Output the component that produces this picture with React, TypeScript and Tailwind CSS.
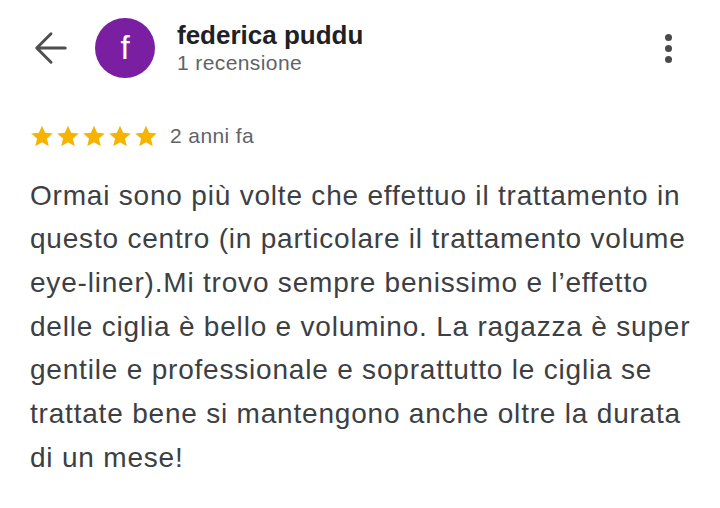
export default function App() {
  const lines = [
    "Ormai sono più volte che effettuo il trattamento in",
    "questo centro (in particolare il trattamento volume",
    "eye-liner).Mi trovo sempre benissimo e l’effetto",
    "delle ciglia è bello e volumino. La ragazza è super",
    "gentile e professionale e soprattutto le ciglia se",
    "trattate bene si mantengono anche oltre la durata",
    "di un mese!",
  ];
  return (
    <div className="w-[720px] h-[508px] bg-white overflow-hidden font-['Liberation_Sans',Arial,sans-serif]">
      <div className="flex items-center pt-[18px] pl-[33px] pr-[48px]">
        <svg width="36" height="36" viewBox="0 0 24 24" className="shrink-0">
          <path d="M21.5 12H3M12 2.5L2.5 12l9.5 9.5" fill="none" stroke="#4f4f4f" strokeWidth="2" strokeLinecap="round" strokeLinejoin="round" />
        </svg>
        <div className="ml-[26px] w-[60px] h-[60px] rounded-full bg-[#7b1fa2] flex items-center justify-center text-white text-[33px] leading-none pb-[2px]">
          f
        </div>
        <div className="ml-[22px] flex-1 flex flex-col mt-[2px]">
          <span className="text-[26px] font-bold text-[#202124] leading-[28px]">federica puddu</span>
          <span className="text-[21px] tracking-[0.4px] text-[#5f6368] leading-[28px]">1 recensione</span>
        </div>
        <div className="flex flex-col gap-[4px]">
          <span className="w-[7px] h-[7px] rounded-full bg-[#4a4a4a]" />
          <span className="w-[7px] h-[7px] rounded-full bg-[#4a4a4a]" />
          <span className="w-[7px] h-[7px] rounded-full bg-[#4a4a4a]" />
        </div>
      </div>
      <div className="flex items-center pl-[29px] mt-[42px]">
        <div className="flex">
          {[0, 1, 2, 3, 4].map((i) => (
            <svg key={i} width="26" height="26" viewBox="0 0 24 24">
              <path d="M12 2.5l2.9 6.6 7.1.6-5.4 4.7 1.6 7-6.2-3.7-6.2 3.7 1.6-7L2 9.7l7.1-.6z" fill="#f5b400" />
            </svg>
          ))}
        </div>
        <span className="ml-[11px] text-[21px] tracking-[0.4px] text-[#5f6368]">2 anni fa</span>
      </div>
      <div className="pl-[30px] mt-[22px] text-[28px] tracking-[0.8px] leading-[43.7px] text-[#3c4043]">
        {lines.map((l, i) => (
          <div key={i} className="whitespace-nowrap">{l}</div>
        ))}
      </div>
    </div>
  );
}
